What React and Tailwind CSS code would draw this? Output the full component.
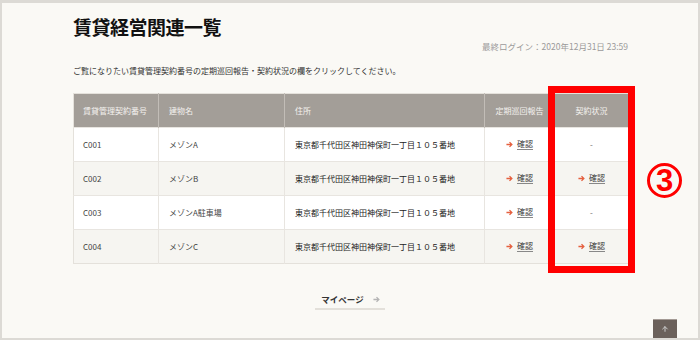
import { ArrowUp } from "lucide-react";

const rows = [
  { no: "C001", name: "メゾンA", addr: "東京都千代田区神田神保町一丁目１０５番地", contract: false },
  { no: "C002", name: "メゾンB", addr: "東京都千代田区神田神保町一丁目１０５番地", contract: true },
  { no: "C003", name: "メゾンA駐車場", addr: "東京都千代田区神田神保町一丁目１０５番地", contract: false },
  { no: "C004", name: "メゾンC", addr: "東京都千代田区神田神保町一丁目１０５番地", contract: true },
];

const Arrow = ({ className }) => (
  <svg width="7" height="7" viewBox="0 0 8 8" className={className}>
    <path d="M0.5 4H6.5M4 1.3L6.7 4L4 6.7" fill="none" stroke="currentColor" strokeWidth="1.5" />
  </svg>
);

const Confirm = () => (
  <a className="inline-flex items-center gap-[4px] text-[#3a3a3a]">
    <Arrow className="text-[#e5603f]" />
    <span className="underline underline-offset-[2px] decoration-[#888]">確認</span>
  </a>
);

const App = () => {
  return (
    <div
      className="relative w-[700px] h-[340px] overflow-hidden border-2 border-t-[3px] border-[#dcdad5] bg-[#faf9f5] text-[#444]"
      style={{ fontFamily: '"Noto Sans CJK JP", "Noto Sans", sans-serif' }}
    >
      <div className="pl-[71px] w-[626px]">
        {/* title */}
        <h1 className="pt-[10px] text-[19px] leading-[28px] font-bold text-[#111] tracking-[-0.5px]">
          賃貸経営関連一覧
        </h1>
        <p className="text-right text-[8.5px] leading-[12px] text-[#9a9a9a] -mt-[1px]">
          最終ログイン：2020年12月31日 23:59
        </p>
        <p className="mt-[13px] text-[8px] leading-[12px] text-[#333]">
          ご覧になりたい賃貸管理契約番号の定期巡回報告・契約状況の欄をクリックしてください。
        </p>

        {/* table */}
        <table className="mt-[16px] w-[555px] table-fixed border-collapse text-[8px] border border-[#e4e1db]">
          <colgroup>
            <col className="w-[85px]" />
            <col className="w-[126px]" />
            <col className="w-[200px]" />
            <col className="w-[70px]" />
            <col className="w-[74px]" />
          </colgroup>
          <thead>
            <tr className="h-[34px] bg-[#a39e98] text-[#f3f1ee] font-normal">
              <th className="pl-[9px] text-left font-normal border-r border-[#c2bdb7]">賃貸管理契約番号</th>
              <th className="pl-[10px] text-left font-normal border-r border-[#c2bdb7]">建物名</th>
              <th className="pl-[10px] text-left font-normal border-r border-[#c2bdb7]">住所</th>
              <th className="text-center font-normal border-r border-[#c2bdb7]">定期巡回報告</th>
              <th className="text-center font-normal">契約状況</th>
            </tr>
          </thead>
          <tbody>
            {rows.map((r, i) => (
              <tr
                key={r.no}
                className={`h-[34px] border-t border-[#e8e5e0] ${i % 2 ? "bg-[#f6f5f1]" : "bg-white"}`}
              >
                <td className="pl-[9px] border-r border-[#e8e5e0]">{r.no}</td>
                <td className="pl-[10px] border-r border-[#e8e5e0]">{r.name}</td>
                <td className="pl-[10px] border-r border-[#e8e5e0] text-[#222]">{r.addr}</td>
                <td className="text-center border-r border-[#e8e5e0]">
                  <Confirm />
                </td>
                <td className="text-center text-[#666]">{r.contract ? <Confirm /> : "-"}</td>
              </tr>
            ))}
          </tbody>
        </table>
      </div>

      {/* my page link */}
      <div className="flex justify-center mt-[29px]">
        <a className="inline-flex items-center gap-[9px] pl-[6px] pr-[5px] pb-[3px] border-b-2 border-[#e3e0da] text-[8.5px] leading-[12px] font-bold text-[#333]">
          マイページ
          <Arrow className="text-[#b5b5b5]" />
        </a>
      </div>

      {/* highlight overlay */}
      <div className="absolute left-[546px] top-[83px] w-[87px] h-[187px] border-[7px] border-[#ff0000]" />
      <div className="absolute left-[645px] top-[160px] w-[35px] h-[35px] rounded-full border-[3px] border-[#ff0000] flex items-center justify-center">
        <span
          className="text-[31px] leading-none font-bold text-[#ff0000]"
          style={{ fontFamily: '"Liberation Sans", Arial, sans-serif' }}
        >
          3
        </span>
      </div>

      {/* back to top */}
      <button className="absolute right-[21px] bottom-0 w-[24px] h-[19px] bg-[#6b615b] border-t border-[#a39a94] flex items-center justify-center text-[#ccc]">
        <ArrowUp size={8} strokeWidth={3} />
      </button>
    </div>
  );
};

export default App;
